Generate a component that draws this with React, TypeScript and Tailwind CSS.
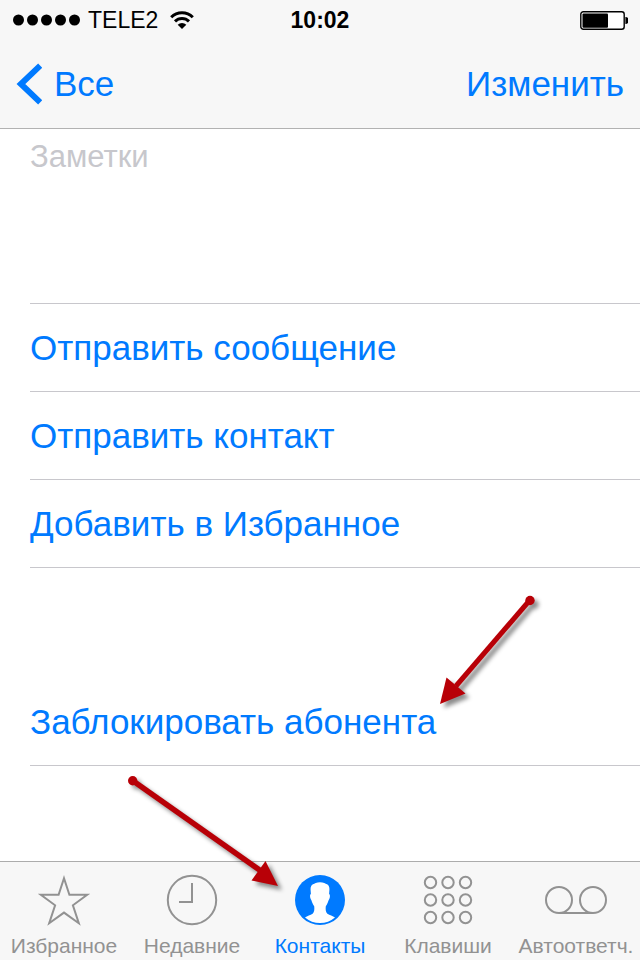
import type { ReactNode } from "react";

const actions = ["Отправить сообщение", "Отправить контакт", "Добавить в Избранное"];

function StatusBar() {
  return (
    <div className="grid h-10 grid-cols-3 items-center px-3 text-[23px] leading-10 text-black">
      <div className="flex items-center gap-2">
        <svg width="68" height="12" viewBox="0 0 68 12" aria-hidden="true">
          {[6.5, 20.5, 34.5, 48.5, 62.5].map((cx) => (
            <circle key={cx} cx={cx} cy="6" r="5.5" />
          ))}
        </svg>
        <span>TELE2</span>
        <svg className="ml-1" width="24" height="18" viewBox="0 0 24 18" aria-hidden="true">
          <g fill="none" stroke="#000" strokeWidth="3">
            <path d="M1.2 6.3a15.3 15.3 0 0 1 21.6 0" />
            <path d="M5 10.4a9.9 9.9 0 0 1 14 0" />
          </g>
          <path d="M12 18 7.7 13.8a6 6 0 0 1 8.6 0Z" />
        </svg>
      </div>
      <time className="text-center font-bold">10:02</time>
      <svg className="justify-self-end" width="49" height="20" viewBox="0 0 49 20" aria-hidden="true">
        <rect x="1.8" y="1.7" width="43.4" height="17.6" rx="2.5" fill="#fff" stroke="#000" strokeWidth="1.4" />
        <rect x="3.5" y="3.5" width="25.5" height="14.2" rx="1" />
        <path d="M46.4 7.1a3.4 3.4 0 0 1 0 6.8Z" />
      </svg>
    </div>
  );
}

function Tab({ label, active, children }: { label: string; active?: boolean; children: ReactNode }) {
  return (
    <a
      href="#"
      aria-current={active ? "page" : undefined}
      className={`relative flex flex-col items-center pt-3 text-[21px] leading-6 ${
        active ? "text-[#007aff]" : "text-[#929292]"
      }`}
    >
      {children}
      <span className="mt-2 whitespace-nowrap">{label}</span>
    </a>
  );
}

export default function App() {
  return (
    <div className="flex min-h-screen flex-col bg-white font-['Liberation_Sans',Arial,sans-serif]">
      <header className="border-b border-[#b2b2b2] bg-[#f7f7f7]">
        <StatusBar />
        <nav className="flex h-22 items-center justify-between px-4 text-[35px] leading-10 text-[#007aff]">
          <a href="#" className="flex items-center gap-3">
            <svg width="26" height="42" viewBox="0 0 26 42" aria-hidden="true">
              <path d="M24.2 2.6 4.9 21l19.3 18.4" fill="none" stroke="currentColor" strokeWidth="6" />
            </svg>
            Все
          </a>
          <button type="button">Изменить</button>
        </nav>
      </header>

      <main className="flex-1 pl-[30px]">
        <div className="flex h-[175px] flex-col border-b border-[#c8c7cc] pt-2">
          <label htmlFor="notes" className="text-[31px] leading-10 text-[#c7c7cc]">
            Заметки
          </label>
          <textarea id="notes" className="w-full flex-1 resize-none text-[31px] leading-10 outline-none" />
        </div>

        {actions.map((action) => (
          <button
            key={action}
            type="button"
            className="block h-22 w-full border-b border-[#c8c7cc] text-left text-[35px] leading-10 text-[#007aff]"
          >
            {action}
          </button>
        ))}

        <button
          type="button"
          className="mt-[110px] block h-22 w-full border-b border-[#c8c7cc] text-left text-[35px] leading-10 text-[#007aff]"
        >
          <span className="relative">
            Заблокировать абонента
            <svg
              className="absolute bottom-8 left-full overflow-visible drop-shadow-[4px_4px_2px_rgba(0,0,0,0.45)]"
              width="100"
              height="112"
              viewBox="0 2 100 112"
              fill="#b80007"
              aria-hidden="true"
            >
              <path d="M93.5 5.5 20 91" stroke="#b80007" strokeWidth="5" />
              <circle cx="94" cy="5.5" r="4.7" />
              <path d="M4 109 10.5 82.5 29.5 98.5Z" />
            </svg>
          </span>
        </button>
      </main>

      <footer className="border-t border-[#acacac] bg-[#f7f7f7]">
        <nav className="grid h-[98px] grid-cols-5">
          <Tab label="Избранное">
            <svg width="54" height="52" viewBox="0 0 54 52" fill="none" stroke="currentColor" strokeWidth="2" aria-hidden="true">
              <path d="M27 4.2 32.4 20.7H50.2L35.9 31.3 41.8 49.2 27 38.6 12.2 49.2 18.1 31.3 3.8 20.7H21.6Z" />
            </svg>
          </Tab>
          <Tab label="Недавние">
            <svg width="52" height="52" viewBox="0 0 52 52" fill="none" stroke="currentColor" strokeWidth="2" aria-hidden="true">
              <circle cx="26" cy="26" r="24.2" />
              <path d="M26 9V28H13" />
            </svg>
          </Tab>
          <Tab label="Контакты" active>
            <svg width="52" height="52" viewBox="0 0 52 52" aria-hidden="true">
              <circle cx="26" cy="26" r="25" fill="currentColor" />
              <path
                fill="#fff"
                d="M26 8.3C22.5 8.3 20.5 9.8 19 10.2C17 11.2 16.4 13.5 16.6 16L16.9 20C15.5 20.4 16 24.6 17.4 26.2C18.2 28.6 19 30.6 20.2 32.2C20.6 35.5 20.2 38.3 18.6 39.8C16.4 41.2 13.2 41.8 11 43.6A23.2 23.2 0 0 0 41 43.6C38.8 41.8 35.6 41.2 33.4 39.8C31.8 38.3 31.4 35.5 31.8 32.2C33 30.6 33.8 28.6 34.6 26.2C36 24.6 36.5 20.4 35.1 20L35.4 16C35.6 13.5 35 11.2 33 10.2C31.5 9.8 29.5 8.3 26 8.3Z"
              />
            </svg>
            <svg
              className="absolute right-1/2 bottom-[70px] mr-10 overflow-visible drop-shadow-[4px_4px_2px_rgba(0,0,0,0.45)]"
              width="152"
              height="114"
              viewBox="0 0 152 114"
              fill="#b80007"
              aria-hidden="true"
            >
              <path d="M4.5 4.5 133 95" stroke="#b80007" strokeWidth="5.5" />
              <circle cx="4.7" cy="4.7" r="4.7" />
              <path d="M150 110 137.5 85 123.5 104.5Z" />
            </svg>
          </Tab>
          <Tab label="Клавиши">
            <svg width="52" height="52" viewBox="0 0 52 52" fill="none" stroke="currentColor" strokeWidth="2" aria-hidden="true">
              {[8.5, 26, 43.5].map((cy) =>
                [8.5, 26, 43.5].map((cx) => <circle key={`${cx}-${cy}`} cx={cx} cy={cy} r="5.7" />)
              )}
            </svg>
          </Tab>
          <Tab label="Автоответч.">
            <svg width="64" height="52" viewBox="0 0 64 52" fill="none" stroke="currentColor" strokeWidth="2" aria-hidden="true">
              <circle cx="15" cy="26" r="13" />
              <circle cx="49" cy="26" r="13" />
              <path d="M15 39H49" />
            </svg>
          </Tab>
        </nav>
      </footer>
    </div>
  );
}
